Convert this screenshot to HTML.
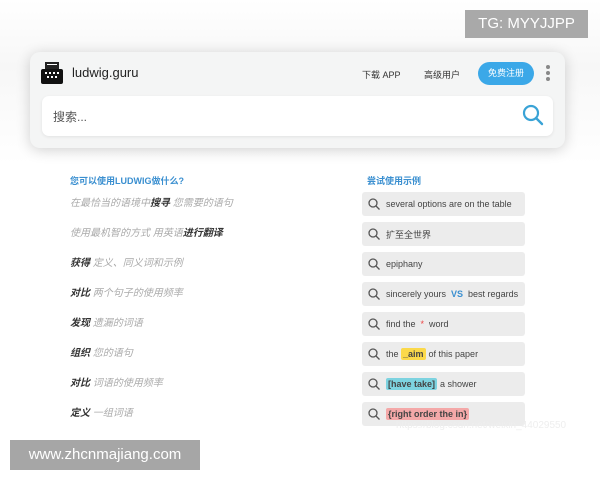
<!DOCTYPE html>
<html><head><meta charset="utf-8"><style>
*{margin:0;padding:0;box-sizing:border-box}
body{width:600px;height:480px;background:#fff;position:relative;overflow:hidden;font-family:"Liberation Sans","Noto Sans CJK SC",sans-serif}
.abs{position:absolute}
.card{left:30px;top:52px;width:535px;height:96px;background:#f4f5f5;border-radius:10px;box-shadow:0 2px 14px rgba(0,0,0,.18)}
.search{left:42px;top:96px;width:511px;height:40px;background:#fff;border-radius:7px;box-shadow:0 1px 3px rgba(0,0,0,.08)}
.l{left:70px;font-size:10px;color:#aaa;font-style:italic;line-height:14px}
.l b{color:#333}
.box{left:362px;width:163px;height:24px;background:#ececec;border-radius:3px;font-size:9px;color:#444;display:flex;align-items:center;padding-left:24px;white-space:nowrap;overflow:hidden}
.box svg{position:absolute;left:6px;top:6px}
.hl{padding:1px 2px;border-radius:2px;font-weight:bold;margin-right:3px}
</style></head><body>
<div class="abs" style="left:0;top:0;width:600px;height:165px;background:linear-gradient(#fff,#f7f7f7 40%,#fff)"></div>
<div class="abs" style="left:465px;top:10px;width:123px;height:28px;background:#a9a9a9;color:#fff;font-size:15px;line-height:28px;text-align:center">TG: MYYJJPP</div>
<div class="abs card"></div>
<svg class="abs" style="left:41px;top:62px" width="22" height="22" viewBox="0 0 22 22"><rect x="4" y="0" width="14" height="7" fill="#222"/><rect x="6" y="2" width="10" height="1" fill="#fff"/><rect x="0" y="7" width="22" height="15" rx="2" fill="#111"/><g fill="#fff"><rect x="4" y="10" width="2" height="2"/><rect x="8" y="10" width="2" height="2"/><rect x="12" y="10" width="2" height="2"/><rect x="16" y="10" width="2" height="2"/><rect x="6" y="14" width="2" height="2"/><rect x="10" y="14" width="2" height="2"/><rect x="14" y="14" width="2" height="2"/></g></svg>
<div class="abs" style="left:72px;top:65px;font-size:13px;color:#222">ludwig.guru</div>
<div class="abs" style="left:362px;top:68px;font-size:9px;color:#333">下载 APP</div>
<div class="abs" style="left:424px;top:68px;font-size:9px;color:#333">高级用户</div>
<div class="abs" style="left:478px;top:62px;width:56px;height:23px;border-radius:12px;background:#3ba8e8;color:#fff;font-size:9px;line-height:23px;text-align:center">免费注册</div>
<div class="abs" style="left:546px;top:65px;width:4px;height:4px;border-radius:2px;background:#888;box-shadow:0 6px 0 #888,0 12px 0 #888"></div>
<div class="abs search"></div>
<div class="abs" style="left:53px;top:108px;font-size:12px;color:#555">搜索...</div>
<svg class="abs" style="left:522px;top:104px" width="22" height="22" viewBox="0 0 22 22"><circle cx="9" cy="9" r="7" fill="none" stroke="#3aa3d6" stroke-width="2.2"/><line x1="14" y1="14" x2="20" y2="20" stroke="#3aa3d6" stroke-width="2.4" stroke-linecap="round"/></svg>
<div class="abs" style="left:70px;top:174px;font-size:9px;color:#3a8fd0;font-weight:bold">您可以使用LUDWIG做什么?</div>
<div class="abs" style="left:367px;top:174px;font-size:9px;color:#3a8fd0;font-weight:bold">尝试使用示例</div>
<div class="abs l" style="top:197px">在最恰当的语境中<b>搜寻</b> 您需要的语句</div>
<div class="abs l" style="top:227px">使用最机智的方式 用英语<b>进行翻译</b></div>
<div class="abs l" style="top:257px"><b>获得</b> 定义、同义词和示例</div>
<div class="abs l" style="top:287px"><b>对比</b> 两个句子的使用频率</div>
<div class="abs l" style="top:317px"><b>发现</b> 遗漏的词语</div>
<div class="abs l" style="top:347px"><b>组织</b> 您的语句</div>
<div class="abs l" style="top:377px"><b>对比</b> 词语的使用频率</div>
<div class="abs l" style="top:407px"><b>定义</b> 一组词语</div>
<svg width="0" height="0" style="position:absolute"><defs><g id="m"><circle cx="5" cy="5" r="4" fill="none" stroke="#555" stroke-width="1.3"/><line x1="8" y1="8" x2="11.5" y2="11.5" stroke="#555" stroke-width="1.3"/></g></defs></svg>
<div class="abs box" style="top:192px"><svg width="12" height="12"><use href="#m"/></svg>several options are on the table</div>
<div class="abs box" style="top:222px"><svg width="12" height="12"><use href="#m"/></svg>扩至全世界</div>
<div class="abs box" style="top:252px"><svg width="12" height="12"><use href="#m"/></svg>epiphany</div>
<div class="abs box" style="top:282px"><svg width="12" height="12"><use href="#m"/></svg>sincerely yours&nbsp;&nbsp;<span style="color:#3a8fd0;font-weight:bold">VS</span>&nbsp;&nbsp;best regards</div>
<div class="abs box" style="top:312px"><svg width="12" height="12"><use href="#m"/></svg>find the &nbsp;<span style="color:#e44">*</span>&nbsp; word</div>
<div class="abs box" style="top:342px"><svg width="12" height="12"><use href="#m"/></svg>the&nbsp;<span class="hl" style="background:#fbd94a">_aim</span>of this paper</div>
<div class="abs box" style="top:372px"><svg width="12" height="12"><use href="#m"/></svg><span class="hl" style="background:#7dd3e0">[have take]</span>a shower</div>
<div class="abs box" style="top:402px"><svg width="12" height="12"><use href="#m"/></svg><span class="hl" style="background:#f4a8a8">{right order the in}</span></div>
<div class="abs" style="left:396px;top:420px;font-size:10px;color:#eee">https://blog.csdn.net/weixin_44029550</div>
<div class="abs" style="left:10px;top:440px;width:190px;height:30px;background:#a6a6a6;color:#fff;font-size:15px;line-height:30px;text-align:center">www.zhcnmajiang.com</div>
</body></html>
